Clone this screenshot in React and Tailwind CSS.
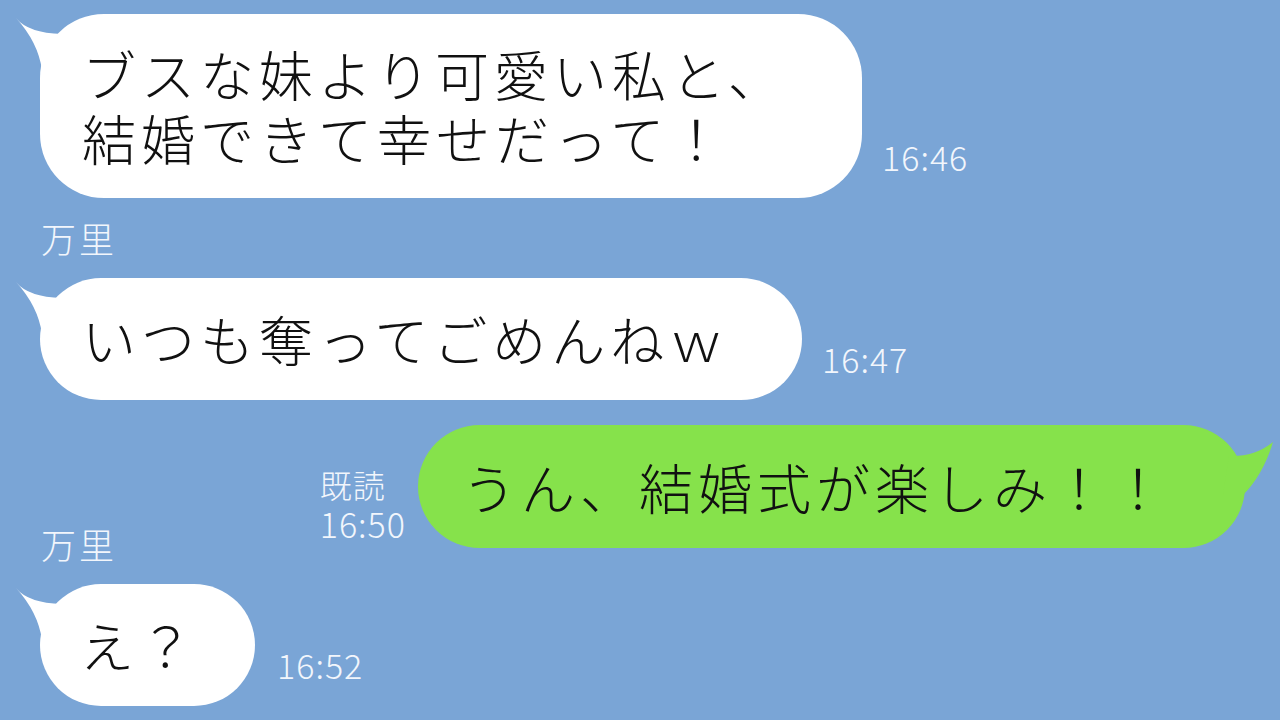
const jp = { fontFamily: '"Noto Sans CJK JP", "Noto Sans", sans-serif' }

function LeftTail() {
  return (
    <svg className="absolute -left-[26px] top-0" width="60" height="60" viewBox="0 0 60 60">
      <path d="M2 4 Q14 19 48 20 L56 56 L28 56 Q24 28 2 4 Z" fill="#ffffff" />
    </svg>
  )
}

function RightTail() {
  return (
    <svg className="absolute -right-[30px] top-0" width="60" height="80" viewBox="0 0 60 80">
      <path d="M58 17 Q40 32 14 31 L8 70 L28 70 Q48 50 58 17 Z" fill="#86e24b" />
    </svg>
  )
}

function Time({ children, className = '' }) {
  return (
    <span className={`block text-[34px] leading-[34px] font-light tracking-[1px] text-[#f2f6fc] ${className}`} style={jp}>
      {children}
    </span>
  )
}

function Name() {
  return (
    <div className="ml-[41px] text-[35px] leading-[36px] font-light text-[#f2f6fc] tracking-[3px]" style={jp}>
      万里
    </div>
  )
}

function Msg({ children }) {
  return <p className="relative text-[54px] leading-[64px] tracking-[5px] font-light text-[#111]">{children}</p>
}

export default function App() {
  return (
    <div className="w-[1280px] h-[720px] bg-[#7aa5d6] overflow-hidden flex flex-col" style={jp}>
      <div className="flex items-end mt-[14px] ml-[40px]">
        <div className="relative w-[822px] h-[184px] bg-white rounded-[64px] flex flex-col justify-center pl-[42px]">
          <LeftTail />
          <Msg>
            ブスな妹より可愛い私と、
            <br />
            結婚できて幸せだって！
          </Msg>
        </div>
        <Time className="ml-[20px] mb-[24px]">16:46</Time>
      </div>

      <div className="mt-[22px]"><Name /></div>

      <div className="flex items-end mt-[22px] ml-[40px]">
        <div className="relative w-[762px] h-[122px] bg-white rounded-[61px] flex items-center pl-[42px]">
          <LeftTail />
          <Msg>いつも奪ってごめんねｗ</Msg>
        </div>
        <Time className="ml-[20px] mb-[24px]">16:47</Time>
      </div>

      <div className="flex items-end justify-end mt-[25px] mr-[35px]">
        <div className="mr-[12px] mb-[4px] text-[#f2f6fc] font-light text-[32px] leading-[40px] tracking-[1px]">
          既読
          <br />
          <span className="text-[34px]">16:50</span>
        </div>
        <div className="relative w-[827px] h-[123px] bg-[#86e24b] rounded-[62px] flex items-center pl-[44px]">
          <RightTail />
          <Msg>うん、結婚式が楽しみ！！</Msg>
        </div>
      </div>

      <div className="-mt-[22px]"><Name /></div>

      <div className="flex items-end mt-[22px] ml-[40px]">
        <div className="relative w-[215px] h-[122px] bg-white rounded-[61px] flex items-center pl-[40px]">
          <LeftTail />
          <Msg>え？</Msg>
        </div>
        <Time className="ml-[22px] mb-[24px]">16:52</Time>
      </div>
    </div>
  )
}
